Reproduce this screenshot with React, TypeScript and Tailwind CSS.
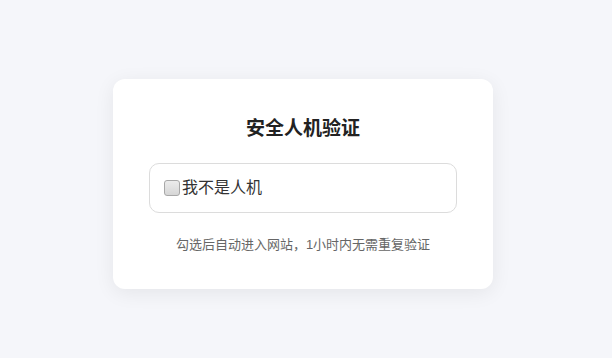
export default function App() {
  return (
    <div
      className="min-h-screen bg-[#f5f6fa] flex items-center justify-center pr-[6px] pt-[10px]"
      style={{ fontFamily: '"Liberation Sans", "Noto Sans CJK SC", sans-serif' }}
    >
      <div className="w-[380px] bg-white rounded-[12px] shadow-[0_4px_20px_rgba(0,0,0,0.07)] px-[36px] pt-[36px] pb-[34px]">
        <h1 className="text-[19px] leading-[28px] font-bold text-[#222] text-center">安全人机验证</h1>
        <label className="mt-[20px] flex items-center h-[50px] border border-[#dcdcdc] rounded-[10px] px-[14px] cursor-pointer">
          <span className="w-[16px] h-[16px] rounded-[3px] border border-[#a8a8a8] bg-gradient-to-b from-[#ececec] to-[#d6d6d6] shrink-0"></span>
          <span className="ml-[2px] text-[16px] leading-[24px] text-[#333]">我不是人机</span>
        </label>
        <p className="mt-[22px] text-[13px] leading-[20px] text-[#666] text-center">勾选后自动进入网站，1小时内无需重复验证</p>
      </div>
    </div>
  );
}
